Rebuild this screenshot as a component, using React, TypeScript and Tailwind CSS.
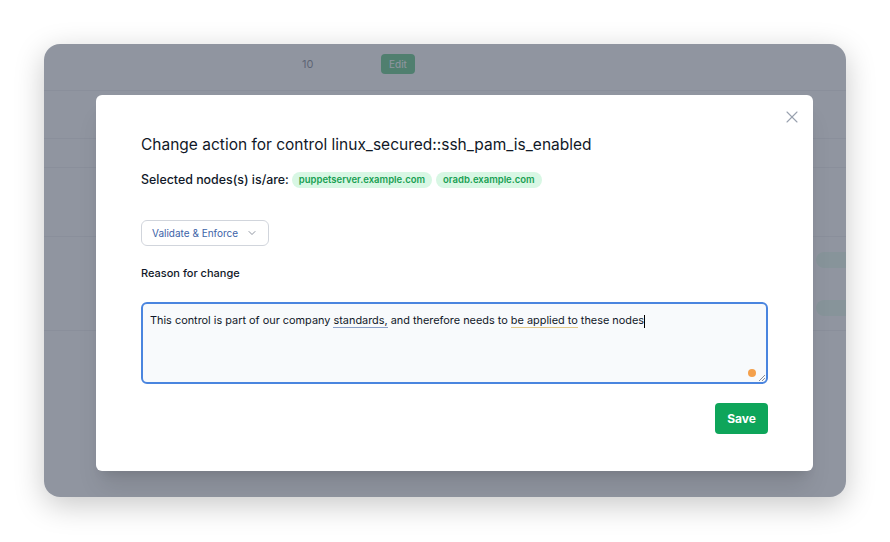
import React from 'react';
import { ChevronDown, X } from 'lucide-react';

function BackgroundTable() {
  return (
    <div className="text-[11px] text-gray-700">
      <div className="relative h-[47px] border-b border-gray-200">
        <span className="absolute left-[258px] top-[12px]">10</span>
        <span className="absolute left-[337px] top-[10px] h-[20px] px-[8px] rounded bg-green-600 text-white text-[10px] leading-[20px]">Edit</span>
      </div>
      <div className="h-[48px] border-b border-gray-200" />
      <div className="h-[29px] border-b border-gray-200" />
      <div className="h-[69px] border-b border-gray-200" />
      <div className="h-[94px] border-b border-gray-200 flex flex-col items-end gap-[32px] pt-[15px]">
        <span className="h-4 w-[30px] rounded-l-full bg-green-100" />
        <span className="h-4 w-[30px] rounded-l-full bg-green-100" />
      </div>
    </div>
  );
}

function Modal() {
  return (
    <div className="relative w-[717px] h-[376px] bg-white rounded-md shadow-xl px-[45px] pt-[38px] text-gray-900">
      <button className="absolute right-[11px] top-[12px] text-gray-400">
        <X className="w-5 h-5" strokeWidth={1.3} />
      </button>
      <h2 className="text-[15.5px] leading-6 text-[#111827]">Change action for control linux_secured::ssh_pam_is_enabled</h2>
      <div className="mt-[13px] flex items-center h-5">
        <span className="text-[12.4px] font-medium mr-[3px]">Selected nodes(s) is/are:</span>
        <span className="rounded-full bg-[#d8f7e4] px-[7px] h-4 leading-4 text-[9.5px] font-semibold text-[#18a053] mr-[4px]">puppetserver.example.com</span>
        <span className="rounded-full bg-[#d8f7e4] px-[7px] h-4 leading-4 text-[9.5px] font-semibold text-[#18a053]">oradb.example.com</span>
      </div>
      <div className="mt-[30px] w-[128px] h-[26px] rounded-md border border-gray-300 flex items-center justify-between pl-[10px] pr-[10px] text-[10px] text-[#3d63a8]">
        <span>Validate &amp; Enforce</span>
        <ChevronDown className="w-3 h-3 text-gray-500" strokeWidth={1.5} />
      </div>
      <div className="mt-[19px] text-[11px] font-medium leading-4">Reason for change</div>
      <div className="relative mt-[21px] h-[82px] rounded-md border-2 border-[#4a85df] bg-[#f8fafc] px-[7px] pt-[8px] text-[10.9px] leading-4">
        This control is part of our company{' '}
        <span className="border-b border-[#8aa0c8]">standards,</span> and therefore needs to{' '}
        <span className="border-b border-[#e2c98a]">be applied to</span> these nodes
        <span className="inline-block w-px h-[13px] bg-black align-middle" />
        <span className="absolute right-[10px] bottom-[5px] w-[8px] h-[8px] rounded-full bg-[#f4a04c]" />
        <svg className="absolute right-[1px] bottom-[1px] w-[6px] h-[6px]" viewBox="0 0 6 6">
          <path d="M6 0L0 6M6 3L3 6" stroke="#6b7280" strokeWidth="0.8" />
        </svg>
      </div>
      <div className="mt-[19px] flex justify-end">
        <button className="h-[31px] w-[53px] rounded bg-[#0ea55a] text-white text-[12px] font-bold">Save</button>
      </div>
    </div>
  );
}

export default function App() {
  return (
    <div className="min-h-[542px] bg-white p-[44px] font-['Inter',sans-serif]">
      <div className="relative w-[802px] h-[453px] rounded-2xl overflow-hidden bg-white shadow-[0_8px_30px_rgba(0,0,0,0.22)]">
        <BackgroundTable />
        <div className="absolute inset-0 bg-[#6b7280]/75 pl-[52px] pt-[51px]">
          <Modal />
        </div>
      </div>
    </div>
  );
}
